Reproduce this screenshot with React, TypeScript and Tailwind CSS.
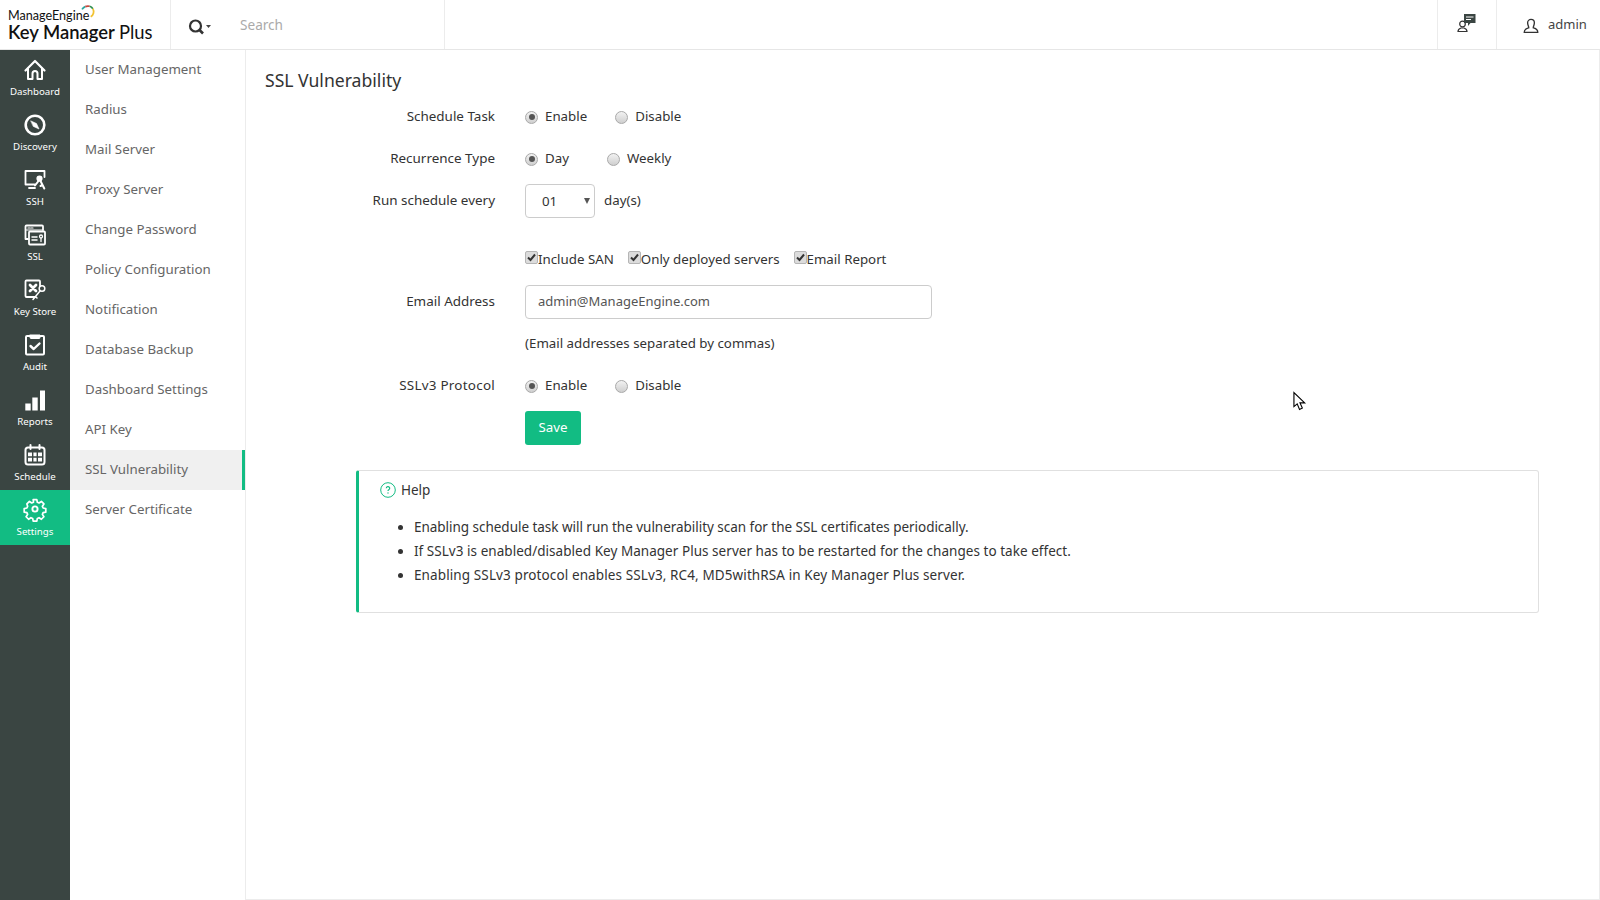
import React from "react";

const font = "font-['Noto_Sans','Liberation_Sans',sans-serif]";

const I = ({ children }: { children: React.ReactNode }) => (
  <svg width="24" height="24" viewBox="0 0 24 24" fill="none" stroke="#fff" strokeWidth="2" strokeLinejoin="round" strokeLinecap="round">
    {children}
  </svg>
);

const icons: Record<string, React.ReactNode> = {
  Dashboard: (
    <I>
      <path d="M2.500 12.500 12 3l9.500 9.500" strokeWidth="2.200" />
      <path d="M5 10.500V21h4.500v-5.500a2.500 2.500 0 0 1 5 0V21H19V10.500" />
    </I>
  ),
  Discovery: (
    <I>
      <circle cx="12" cy="12" r="9.300" strokeWidth="2.600" />
      <path d="M8 8l5.500 2.500L16 16l-5.500-2.500z" fill="#fff" strokeWidth=".6" />
    </I>
  ),
  SSH: (
    <I>
      <path d="M12 16.500H2.500V3h19v6" strokeWidth="1.800" />
      <path d="M6 20h6" strokeWidth="1.800" />
      <circle cx="16.500" cy="10.500" r="2.400" fill="#fff" strokeWidth="1.400" />
      <path d="M15.500 13l-3.500 4.500M17.500 13l3.800 7.500M19.500 17l-2 1" strokeWidth="2" />
    </I>
  ),
  SSL: (
    <I>
      <path d="M5 16H2.500V3.500a1 1 0 0 1 1-1h15.500a1 1 0 0 1 1 1V7" strokeWidth="1.800" />
      <path d="M3 7h17M5 5h2M8 5h2" strokeWidth="1.200" />
      <rect x="6" y="8.500" width="16" height="13" rx="1" strokeWidth="1.800" />
      <path d="M9 14h5M9 17h5" strokeWidth="1.500" />
      <circle cx="18" cy="13.500" r="1.500" strokeWidth="1.300" />
      <path d="M18 15v3.500" strokeWidth="1.300" />
    </I>
  ),
  "Key Store": (
    <I>
      <path d="M12 19H3.500a1 1 0 0 1-1-1V3.500a1 1 0 0 1 1-1H16a1 1 0 0 1 1 1V8" strokeWidth="1.800" />
      <path d="M7 7l6 6M13 7l-6 6" strokeWidth="2.800" />
      <circle cx="19" cy="10.500" r="2.800" strokeWidth="1.500" />
      <path d="M17 13l-7 8.500M12.500 18.500l1.500 1.500" strokeWidth="1.500" />
    </I>
  ),
  Audit: (
    <I>
      <rect x="3" y="3" width="18" height="18.500" rx="1" strokeWidth="2" />
      <path d="M7 2h10v2.500a1 1 0 0 1-1 1H8a1 1 0 0 1-1-1z" fill="#fff" strokeWidth="1" />
      <path d="M7.500 13l3.200 3 5.800-5.500" strokeWidth="2.400" />
    </I>
  ),
  Reports: (
    <svg width="24" height="24" viewBox="0 0 24 24" fill="#fff">
      <rect x="2.300" y="15.500" width="5.400" height="7" />
      <rect x="9.300" y="9.500" width="5.400" height="13" />
      <rect x="17" y="2.500" width="5" height="20" />
    </svg>
  ),
  Schedule: (
    <I>
      <rect x="2.500" y="4.500" width="19" height="17" rx="2.500" strokeWidth="2" />
      <path d="M7.500 2v4M16.500 2v4" strokeWidth="2" />
      <path d="M5 9.500h14v9H5z" fill="#fff" stroke="none" />
      <path d="M5 14h14M9.700 9.500v9M14.300 9.500v9" stroke="#3a4542" strokeWidth="1.400" />
    </I>
  ),
  Settings: (
    <I>
      <path
        strokeWidth="1.900"
        d="M10 1.500h4l.6 3 1.900.8 2.600-1.700 2.800 2.800-1.700 2.600.8 1.900 3 .6v4l-3 .6-.8 1.900 1.700 2.600-2.800 2.800-2.600-1.700-1.900.8-.6 3h-4l-.6-3-1.900-.8-2.600 1.700-2.800-2.800 1.700-2.600-.8-1.900-3-.6v-4l3-.6.8-1.900L3 6.400l2.800-2.800 2.600 1.700 1.900-.8z"
        transform="translate(1.200 .2) scale(.9)"
      />
      <circle cx="12" cy="11" r="2.600" strokeWidth="1.900" />
    </I>
  ),
};

const navItems = ["Dashboard", "Discovery", "SSH", "SSL", "Key Store", "Audit", "Reports", "Schedule", "Settings"];
const subItems = [
  "User Management",
  "Radius",
  "Mail Server",
  "Proxy Server",
  "Change Password",
  "Policy Configuration",
  "Notification",
  "Database Backup",
  "Dashboard Settings",
  "API Key",
  "SSL Vulnerability",
  "Server Certificate",
];

const Radio = ({ on }: { on?: boolean }) => (
  <span className="flex h-[13px] w-[13px] items-center justify-center rounded-full border border-[#a9a9a9] bg-gradient-to-b from-[#f2f2f2] to-[#cfcfcf]">
    {on && <span className="h-[6px] w-[6px] rounded-full bg-[#555]" />}
  </span>
);

const RadioOpt = ({ label, on, gap }: { label: string; on?: boolean; gap?: string }) => (
  <label className={`flex items-center ${gap ?? ""}`}>
    <Radio on={on} />
    <span className="ml-[7px]">{label}</span>
  </label>
);

const Check = ({ label, cls }: { label: string; cls?: string }) => (
  <label className={`flex items-center ${cls ?? ""}`}>
    <span className="mb-[4px] flex h-[13px] w-[13px] items-center justify-center rounded-[2px] border border-[#b5b5b5] bg-[#dcdcdc]">
      <svg width="11" height="11" viewBox="0 0 11 11" fill="none" stroke="#333" strokeWidth="2">
        <path d="M2 5.500 4.500 8 9 2.500" />
      </svg>
    </span>
    <span className="mt-[2px]">{label}</span>
  </label>
);

const Row = ({ label, children, cls, labelCls }: { label?: string; children: React.ReactNode; cls?: string; labelCls?: string }) => (
  <div className={`flex h-[34px] items-center ${cls ?? "mb-[8px]"}`}>
    <div className={`mr-[30px] mb-[2px] w-[230px] text-right text-[13.45px] ${labelCls ?? ""}`}>{label}</div>
    {children}
  </div>
);

export default function App() {
  return (
    <div className={`flex h-screen w-[1600px] flex-col overflow-hidden bg-white text-[13.3px] text-[#333] ${font}`}>
      <header className="flex h-[50px] shrink-0 items-stretch border-b border-[#e6e6e6]">
        <div className="relative w-[171px] border-r border-[#ececec] pl-[8px]">
          <div className="pt-[8px] font-['Lato',sans-serif] text-[12.6px] leading-[15px] text-[#111]">ManageEngine</div>
          <div className="-mt-[2px] font-['Lato',sans-serif] text-[18.4px] leading-[22px] font-semibold text-[#111]">
            Key Manager <span className="font-normal">Plus</span>
          </div>
          <svg className="absolute top-[5px] left-[81px]" width="14" height="14" viewBox="0 0 13 13" fill="none" strokeWidth="1.600">
            <path d="M1 4A5.500 5.500 0 0 1 4 1.500" stroke="#2aa7a0" />
            <path d="M4 1.500A5.500 5.500 0 0 1 8 1.200" stroke="#c8463c" />
            <path d="M8 1.200A5.500 5.500 0 0 1 11 3.500" stroke="#2f8f4e" />
            <path d="M11 3.500A5.500 5.500 0 0 1 9 11" stroke="#f2c230" />
          </svg>
        </div>
        <div className="flex w-[274px] items-center border-r border-[#ececec]">
          <div className="mt-[5px] ml-[17px] flex w-[52px] items-center">
            <svg width="18" height="18" viewBox="0 0 18 18" fill="none" stroke="#333" strokeWidth="2.200">
              <circle cx="7.500" cy="8" r="5.500" />
              <path d="m11.500 12 3.500 3.500" strokeWidth="2.600" />
            </svg>
            <svg className="mb-[2px]" width="5" height="3" viewBox="0 0 5 3" fill="#444">
              <path d="M0 0h5L2.500 3z" />
            </svg>
          </div>
          <span className="mt-[2px] text-[13.6px] text-[#aaa]">Search</span>
        </div>
        <div className="flex-1" />
        <div className="flex w-[60px] items-center justify-center border-x border-[#ececec]">
          <svg className="mb-[4px]" width="20" height="20" viewBox="0 0 20 20" fill="none">
            <circle cx="5.500" cy="11" r="2.800" stroke="#333" strokeWidth="1.200" />
            <path d="M1 18.500c0-2 1.500-3 3-3.500h3c1.500.5 3 1.500 3 3.500z" stroke="#333" strokeWidth="1.200" />
            <path d="M7 1h11.500v9h-5L11 13v-3H7z" fill="#3a4542" />
            <path d="M9 4h7.500M9 6.500h5" stroke="#fff" strokeWidth="1" />
          </svg>
        </div>
        <div className="flex shrink-0 basis-[103px] items-center pl-[25px]">
          <svg width="18" height="18" viewBox="0 0 16 16" fill="none" stroke="#333" strokeWidth="1.200">
            <path d="M5 6a3 3 0 0 1 6 0c0 2-1 3-1 4.500 1.500.5 4 1 4 4H2c0-3 2.500-3.500 4-4C6 9 5 8 5 6z" />
          </svg>
          <span className="mt-[1px] ml-[8px] text-[13px] text-[#444]">admin</span>
        </div>
      </header>
      <div className="flex min-h-0 flex-1">
        <nav className="w-[70px] shrink-0 bg-[#3a4542]">
          {navItems.map((n) => (
            <div key={n} className={`flex h-[55px] flex-col items-center pt-[8px] ${n === "Settings" ? "bg-[#12bc83]" : ""}`}>
              <div className="h-[24px]">{icons[n]}</div>
              <div className="mt-[3px] text-[9.7px] leading-[13px] text-white">{n}</div>
            </div>
          ))}
        </nav>
        <aside className="w-[176px] shrink-0 border-r border-[#ececec]">
          {subItems.map((s) => (
            <div
              key={s}
              className={`flex h-[40px] items-center pl-[15px] text-[13.3px] text-[#666] ${
                s === "SSL Vulnerability" ? "border-r-[3px] border-[#12bc83] bg-[#f0f0f0]" : ""
              }`}
            >
              {s}
            </div>
          ))}
        </aside>
        <main className="flex-1 border-r border-b border-[#ececec] pl-[19px]">
          <h1 className="pt-[18px] pb-[8px] text-[17.6px] leading-[24px] font-normal text-[#333]">SSL Vulnerability</h1>
          <Row label="Schedule Task">
            <RadioOpt label="Enable" on gap="mr-[28px]" />
            <RadioOpt label="Disable" />
          </Row>
          <Row label="Recurrence Type">
            <RadioOpt label="Day" on gap="mr-[38px]" />
            <RadioOpt label="Weekly" />
          </Row>
          <Row label="Run schedule every" cls="mb-[24px]">
            <div className="relative h-[34px] w-[70px] rounded-[4px] border border-[#ccc] pl-[16px] leading-[33px]">
              01
              <span className="absolute top-[13px] right-[4px] h-0 w-0 border-x-[3px] border-t-[6px] border-x-transparent border-t-[#555]" />
            </div>
            <span className="ml-[9px]">day(s)</span>
          </Row>
          <Row cls="mb-[9px]">
            <Check label="Include SAN" cls="mr-[14px]" />
            <Check label="Only deployed servers" cls="mr-[14px]" />
            <Check label="Email Report" />
          </Row>
          <Row label="Email Address">
            <input
              readOnly
              value="admin@ManageEngine.com"
              className="h-[34px] w-[407px] rounded-[4px] border border-[#ccc] px-[12px] pb-[2px] text-[13px] text-[#555] outline-none"
            />
          </Row>
          <Row>
            <span>(Email addresses separated by commas)</span>
          </Row>
          <Row label="SSLv3 Protocol" labelCls="tracking-[.25px]">
            <RadioOpt label="Enable" on gap="mr-[28px]" />
            <RadioOpt label="Disable" />
          </Row>
          <Row cls="mb-0">
            <button className="h-[34px] w-[56px] rounded-[3px] bg-[#12bc83] text-white">Save</button>
          </Row>
          <section className="mt-[25px] ml-[91px] h-[143px] w-[1183px] rounded-[3px] border border-l-[3px] border-[#e0e0e0] border-l-[#12bc83] pt-[9px] text-[13.5px]">
            <div className="flex items-center pl-[21px] leading-[20px]">
              <svg width="16" height="16" viewBox="0 0 16 16" fill="none">
                <circle cx="8" cy="8" r="7.300" stroke="#12bc83" />
                <path d="M6.300 6.300a1.700 1.700 0 1 1 2.500 1.500c-.5.3-.8.6-.8 1.200" stroke="#12bc83" strokeWidth="1.200" />
                <circle cx="8" cy="11" r=".7" fill="#12bc83" />
              </svg>
              <span className="ml-[5px]">Help</span>
            </div>
            <ul className="mt-[15px] pl-[39px] leading-[24px]">
              <li className="flex items-center tracking-[-.03px]">
                <span className="mr-[11px] h-[5px] w-[5px] rounded-full bg-[#333]" />
                Enabling schedule task will run the vulnerability scan for the SSL certificates periodically.
              </li>
              <li className="flex items-center tracking-[.04px]">
                <span className="mr-[11px] h-[5px] w-[5px] rounded-full bg-[#333]" />
                If SSLv3 is enabled/disabled Key Manager Plus server has to be restarted for the changes to take effect.
              </li>
              <li className="flex items-center tracking-[.11px]">
                <span className="mr-[11px] h-[5px] w-[5px] rounded-full bg-[#333]" />
                Enabling SSLv3 protocol enables SSLv3, RC4, MD5withRSA in Key Manager Plus server.
              </li>
            </ul>
          </section>
        </main>
      </div>
      <svg className="absolute top-[391px] left-[1293px]" width="14" height="21" viewBox="0 0 15 21" fill="#fff" stroke="#000" strokeWidth="1.200">
        <path d="M1 1v15l3.500-3 2.500 6 3-1.500-2.500-5.500h5z" />
      </svg>
    </div>
  );
}
